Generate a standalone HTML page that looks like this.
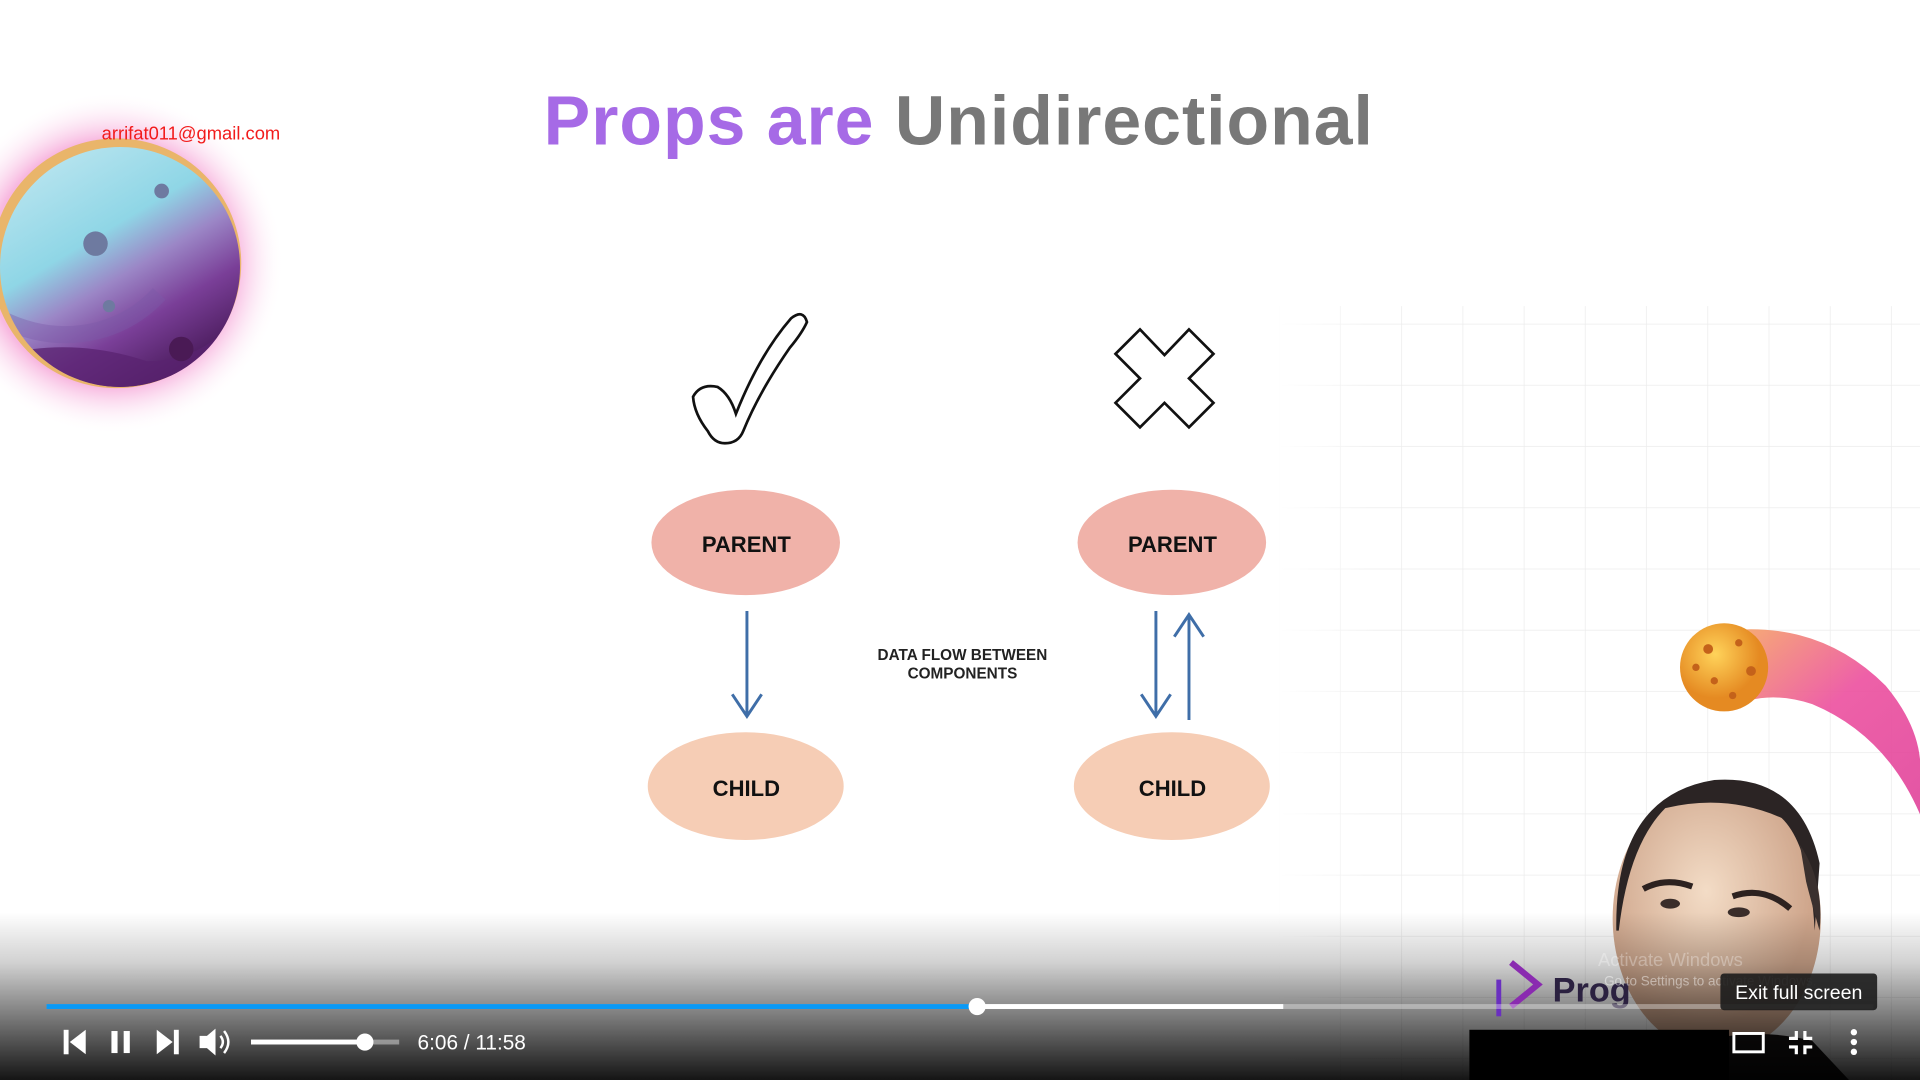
<!DOCTYPE html>
<html><head><meta charset="utf-8"><style>
html,body{margin:0;padding:0;width:1920px;height:1080px;overflow:hidden;background:#fff;}
#s{position:absolute;left:0;top:0;width:1568px;height:882px;transform:scale(1.22449);transform-origin:0 0;overflow:hidden;background:#fff;font-family:"Liberation Sans",sans-serif;}
.abs{position:absolute;}
</style></head><body><div id="s">
<svg class="abs" style="left:0;top:0" width="1568" height="882" viewBox="0 0 1568 882">
<defs>
<pattern id="g" width="50" height="50" patternUnits="userSpaceOnUse" x="1045" y="265"><path d="M50 0V50M0 50H50" stroke="#ececec" stroke-width="1.2" fill="none"/></pattern>
<linearGradient id="gf" x1="0" y1="0" x2="1" y2="0"><stop offset="0" stop-color="#fff" stop-opacity="1"/><stop offset="0.15" stop-color="#fff" stop-opacity="0"/></linearGradient>
<radialGradient id="glow"><stop offset="0.72" stop-color="#f6a6d8"/><stop offset="1" stop-color="#fff" stop-opacity="0"/></radialGradient>
<linearGradient id="pl" x1="0" y1="0" x2="0.6" y2="1"><stop offset="0" stop-color="#c6e9f2"/><stop offset="0.45" stop-color="#8fd6e6"/><stop offset="0.62" stop-color="#9b86c6"/><stop offset="0.8" stop-color="#7a3f98"/><stop offset="1" stop-color="#4f1f62"/></linearGradient>
<linearGradient id="tail" x1="0" y1="0" x2="1" y2="1"><stop offset="0" stop-color="#f7b35a"/><stop offset="0.5" stop-color="#ec4f9e"/><stop offset="1" stop-color="#e0429a"/></linearGradient>
<radialGradient id="ball" cx="0.4" cy="0.35"><stop offset="0" stop-color="#ffd35a"/><stop offset="1" stop-color="#e58a22"/></radialGradient>
<linearGradient id="bot" x1="0" y1="0" x2="0" y2="1"><stop offset="0" stop-color="#000" stop-opacity="0"/><stop offset="0.3" stop-color="#000" stop-opacity="0.18"/><stop offset="0.65" stop-color="#000" stop-opacity="0.55"/><stop offset="1" stop-color="#000" stop-opacity="0.92"/></linearGradient>
<radialGradient id="skin" cx="0.45" cy="0.4"><stop offset="0" stop-color="#f3dcc6"/><stop offset="1" stop-color="#cfa68c"/></radialGradient>
<clipPath id="pc"><circle cx="98" cy="218" r="98"/></clipPath>
</defs>
<rect x="1045" y="250" width="523" height="632" fill="url(#g)"/>
<rect x="1045" y="250" width="523" height="632" fill="url(#gf)"/>
<!-- planet -->
<circle cx="92" cy="215" r="140" fill="url(#glow)" opacity="0.8"/>
<circle cx="95" cy="215" r="102" fill="#e9b56a"/>
<circle cx="98" cy="218" r="98" fill="url(#pl)"/>
<g clip-path="url(#pc)">
<path d="M0 290 Q60 275 120 295 Q170 295 200 250 L200 330 L0 330Z" fill="#5a2370" opacity="0.75"/>
<path d="M0 260 Q40 280 80 270 Q110 262 130 240" stroke="#7a5aa8" stroke-width="14" fill="none" opacity="0.4"/>
</g>
<circle cx="132" cy="156" r="6" fill="#6e7aa0"/><circle cx="78" cy="199" r="10" fill="#6e7aa0"/><circle cx="89" cy="250" r="5" fill="#6e7aa0"/><circle cx="148" cy="285" r="10" fill="#4a1a55"/>
<!-- check -->
<path d="M578 352 Q567 338 566 324 Q572 313 586 316 Q596 322 601 338 Q620 290 646 260 Q656 252 659 263 Q655 272 645 284 Q620 320 607 352 Q603 362 592 362 Q583 362 578 352Z" fill="#fff" stroke="#111" stroke-width="2.2"/>
<!-- X -->
<path d="M911 289 L931 269 L951 290 L971 269 L991 289 L971 309 L991 329 L971 349 L951 329 L931 349 L911 329 L931 309Z" fill="#fff" stroke="#111" stroke-width="2.2"/>
<ellipse cx="609" cy="443" rx="77" ry="43" fill="#f0b2a9"/>
<ellipse cx="957" cy="443" rx="77" ry="43" fill="#f0b2a9"/>
<ellipse cx="609" cy="642" rx="80" ry="44" fill="#f6cdb5"/>
<ellipse cx="957" cy="642" rx="80" ry="44" fill="#f6cdb5"/>
<g stroke="#3f6ea8" stroke-width="2.4" fill="none">
<path d="M610 499V585M598 567L610 585L622 567"/>
<path d="M944 499V585M932 567L944 585L956 567"/>
<path d="M971 588V502M959 520L971 502L983 520"/>
</g>
<!-- comet -->
<path d="M1390 518 Q1480 500 1540 560 Q1565 590 1568 620 L1568 665 Q1540 600 1480 575 Q1440 562 1410 580Z" fill="url(#tail)" opacity="0.9"/>
<circle cx="1408" cy="545" r="36" fill="url(#ball)"/>
<g fill="#c4621a"><circle cx="1395" cy="530" r="4"/><circle cx="1420" cy="525" r="3"/><circle cx="1430" cy="548" r="4"/><circle cx="1400" cy="556" r="3"/><circle cx="1385" cy="545" r="3"/><circle cx="1415" cy="568" r="3"/></g>
<!-- person -->
<ellipse cx="1402" cy="750" rx="85" ry="110" fill="url(#skin)"/>
<path d="M1320 760 Q1318 650 1400 637 Q1470 632 1486 705 L1482 760 Q1478 690 1455 668 Q1410 648 1360 660 Q1330 690 1322 760Z" fill="#2b2424"/>
<path d="M1470 690 Q1490 720 1486 760 Q1480 740 1475 720Z" fill="#3a302e"/>
<path d="M1342 726 Q1360 716 1382 724M1415 732 Q1440 723 1462 742" stroke="#2d2220" stroke-width="5" fill="none"/>
<ellipse cx="1364" cy="738" rx="8" ry="4" fill="#3a2d2a"/><ellipse cx="1420" cy="745" rx="9" ry="4" fill="#3a2d2a"/>
<path d="M1320 882 Q1400 830 1480 850 L1510 882Z" fill="#181414"/>
<!-- bottom gradient -->
<rect x="0" y="745" width="1568" height="137" fill="url(#bot)"/>
<!-- Prog logo -->
<path d="M1234 786 L1256 804 L1234 822" stroke="#8a2bb0" stroke-width="5" fill="none"/>
<path d="M1224 800 V830" stroke="#6a2fc0" stroke-width="4"/>
<text x="1268" y="818" font-family="Liberation Sans" font-size="28" fill="#2b2140" font-weight="bold">Prog</text>
<text x="1305" y="789" font-size="15" fill="#fff" opacity="0.3" font-family="Liberation Sans">Activate Windows</text>
<text x="1310" y="805" font-size="11" fill="#fff" opacity="0.45" font-family="Liberation Sans">Go to Settings to activate Windows.</text>
<!-- progress -->
<rect x="38" y="820" width="1492" height="4" fill="#fff" fill-opacity="0.35"/>
<rect x="798" y="820" width="250" height="4" fill="#fff"/>
<rect x="38" y="820" width="760" height="4" fill="#0a99f5"/>
<circle cx="798" cy="822" r="7" fill="#fff"/>
<rect x="1405" y="795" width="128" height="30" rx="3" fill="#1c1c1c" fill-opacity="0.9"/>
<text x="1469" y="816" text-anchor="middle" font-size="16" fill="#fff" font-family="Liberation Sans">Exit full screen</text>
<rect x="1200" y="841" width="212" height="41" fill="#000"/>
<!-- controls -->
<g fill="#fff">
<rect x="52" y="841" width="4" height="20"/><path d="M70 841V861L57 851Z"/>
<rect x="91" y="842" width="5" height="18"/><rect x="101" y="842" width="5" height="18"/>
<path d="M128 841V861L141 851Z"/><rect x="142" y="841" width="4" height="20"/>
<path d="M163 846H169L176 840V862L169 856H163Z"/>
</g>
<path d="M180 846Q184 851 180 856M183 842Q190 851 183 860" stroke="#fff" stroke-width="2" fill="none"/>
<rect x="205" y="849" width="121" height="4" fill="#fff" fill-opacity="0.4"/>
<rect x="205" y="849" width="93" height="4" fill="#fff"/>
<circle cx="298" cy="851" r="7" fill="#fff"/>
<text x="341" y="857" font-size="17" fill="#fff" font-family="Liberation Sans">6:06 / 11:58</text>
<rect x="1416" y="844" width="24" height="15" fill="none" stroke="#fff" stroke-width="2.4"/>
<g stroke="#fff" stroke-width="2.6" fill="none">
<path d="M1467 842V848H1461M1474 842V848H1480M1467 861V855H1461M1474 861V855H1480"/>
</g>
<g fill="#fff"><circle cx="1514" cy="843" r="2.6"/><circle cx="1514" cy="851" r="2.6"/><circle cx="1514" cy="859" r="2.6"/></g>
</svg>
<div class="abs" style="left:444px;top:66px;font-size:57px;font-weight:bold;white-space:nowrap;letter-spacing:0.8px"><span style="color:#a66ae6">Props are </span><span style="color:#787878">Unidirectional</span></div>
<div class="abs" style="left:83px;top:101px;font-size:15px;color:#f21b1b">arrifat011@gmail.com</div>
<div class="abs" style="left:532px;top:435px;width:155px;text-align:center;font-size:18px;font-weight:bold;color:#111">PARENT</div>
<div class="abs" style="left:880px;top:435px;width:155px;text-align:center;font-size:18px;font-weight:bold;color:#111">PARENT</div>
<div class="abs" style="left:532px;top:634px;width:155px;text-align:center;font-size:18px;font-weight:bold;color:#111">CHILD</div>
<div class="abs" style="left:880px;top:634px;width:155px;text-align:center;font-size:18px;font-weight:bold;color:#111">CHILD</div>
<div class="abs" style="left:686px;top:528px;width:200px;text-align:center;font-size:12.5px;font-weight:bold;color:#222;line-height:15px">DATA FLOW BETWEEN<br>COMPONENTS</div>
</div></body></html>
